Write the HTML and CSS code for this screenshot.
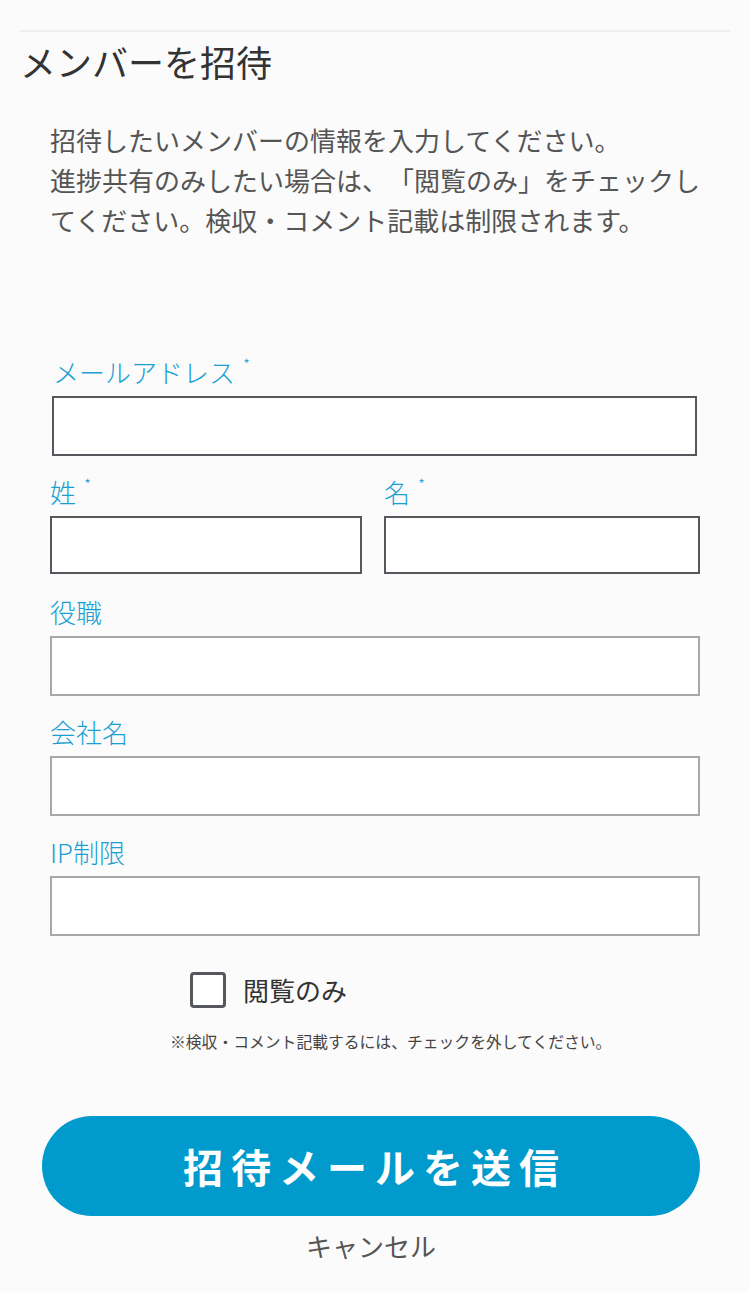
FILE: index.html
```html
<!DOCTYPE html>
<html lang="ja">
<head>
  <meta charset="UTF-8" />
  <meta name="viewport" content="width=device-width, initial-scale=1" />
  <title>メンバーを招待</title>
  <link rel="stylesheet" href="styles.css">
</head>
<body>
<div id="mainContent">

  <h1 class="page-title">メンバーを招待</h1>

  <p class="intro">
    招待したいメンバーの情報を入力してください。<br>
    進捗共有のみしたい場合は、「閲覧のみ」をチェックしてください。検収・コメント記載は制限されます。
  </p>

  <!-- 招待フォーム -->
  <form id="inviteForm" class="invite-form" autocomplete="off" spellcheck="false">
    <div class="field field-email">
      <label for="email">メールアドレス<span class="req">*</span></label>
      <input type="text" id="email" class="input-required" />
    </div>

    <div class="name-row">
      <div class="field">
        <label for="lastName">姓<span class="req">*</span></label>
        <input type="text" id="lastName" class="input-required" />
      </div>
      <div class="field">
        <label for="firstName">名<span class="req">*</span></label>
        <input type="text" id="firstName" class="input-required" />
      </div>
    </div>

    <div class="field">
      <label for="position">役職</label>
      <input type="text" id="position" />
    </div>

    <div class="field">
      <label for="company">会社名</label>
      <input type="text" id="company" />
    </div>

    <div class="field">
      <label for="ipLimit">IP制限</label>
      <input type="text" id="ipLimit" />
    </div>

    <label class="check-row" for="viewOnly">
      <input type="checkbox" id="viewOnly" />
      <span class="check-box"></span>
      <span class="check-label">閲覧のみ</span>
    </label>
    <p class="note">※検収・コメント記載するには、チェックを外してください。</p>

    <button type="submit" class="btn-send">招待メールを送信</button>
    <a href="#" class="cancel">キャンセル</a>
  </form>

</div>
</body>
</html>
```

FILE: styles.css
```css
/* Reset margin & padding */
* {
  margin: 0;
  padding: 0;
  box-sizing: border-box;
}

body {
  font-family: "Noto Sans CJK JP", "Noto Sans", sans-serif;
  background: #fbfbfb;
  color: #333;
  padding: 30px 20px 0;
  min-height: 100vh;
  text-spacing-trim: space-all;
}

#mainContent {
  border-top: 2px solid #eeeeee;
}

.page-title {
  font-size: 36px;
  font-weight: 400;
  line-height: 44px;
  margin-top: 7px;
  color: #333;
}

.intro {
  font-size: 26px;
  line-height: 40px;
  color: #555;
  margin: 37px 0 0 30px;
  width: 652px;
}

.invite-form {
  margin: 114px 30px 0 30px;
}

.field label {
  display: block;
  font-size: 26px;
  font-weight: 300;
  line-height: 36px;
  color: #1a9fd2;
  margin-bottom: 6px;
}

.req {
  font-size: 16px;
  vertical-align: top;
  margin-left: 8px;
  line-height: 20px;
}

.field input {
  display: block;
  width: 100%;
  height: 60px;
  background: #fff;
  border: 2px solid #a8a8a8;
  font-size: 24px;
  padding: 0 12px;
  outline: none;
}

.field input.input-required {
  border-color: #55585c;
  height: 58px;
}

.field-email {
  margin: 0 2px 0 3px;
}

.field-email input {
  margin-left: -1px;
  height: 60px !important;
}

.name-row {
  display: grid;
  grid-template-columns: 312px 1fr;
  gap: 22px;
  margin-top: 18px;
}

.name-row + .field {
  margin-top: 20px;
}

.field + .field {
  margin-top: 18px;
}

.name-row .field + .field {
  margin-top: 0;
}

.check-row {
  display: flex;
  align-items: center;
  margin: 36px 0 0 140px;
  cursor: pointer;
}

.check-row input {
  display: none;
}

.check-box {
  width: 36px;
  height: 36px;
  border: 3px solid #55585c;
  border-radius: 4px;
  background: #fff;
}

.check-label {
  font-size: 26px;
  line-height: 36px;
  color: #333;
  margin-left: 17px;
}

.note {
  font-size: 15.8px;
  line-height: 24px;
  color: #444;
  margin: 22px 0 0 120px;
}

.btn-send {
  display: block;
  width: 658px;
  height: 100px;
  margin: 62px 0 0 -8px;
  border: none;
  border-radius: 50px;
  background-color: #009acd;
  color: #fff;
  font-family: inherit;
  font-size: 40px;
  font-weight: 700;
  letter-spacing: 8px;
  text-indent: 8px;
  cursor: pointer;
}

.cancel {
  display: block;
  width: 130px;
  margin: 11px auto 0;
  position: relative;
  left: -4px;
  text-align: center;
  font-size: 26px;
  line-height: 38px;
  color: #555;
  text-decoration: none;
}
```
